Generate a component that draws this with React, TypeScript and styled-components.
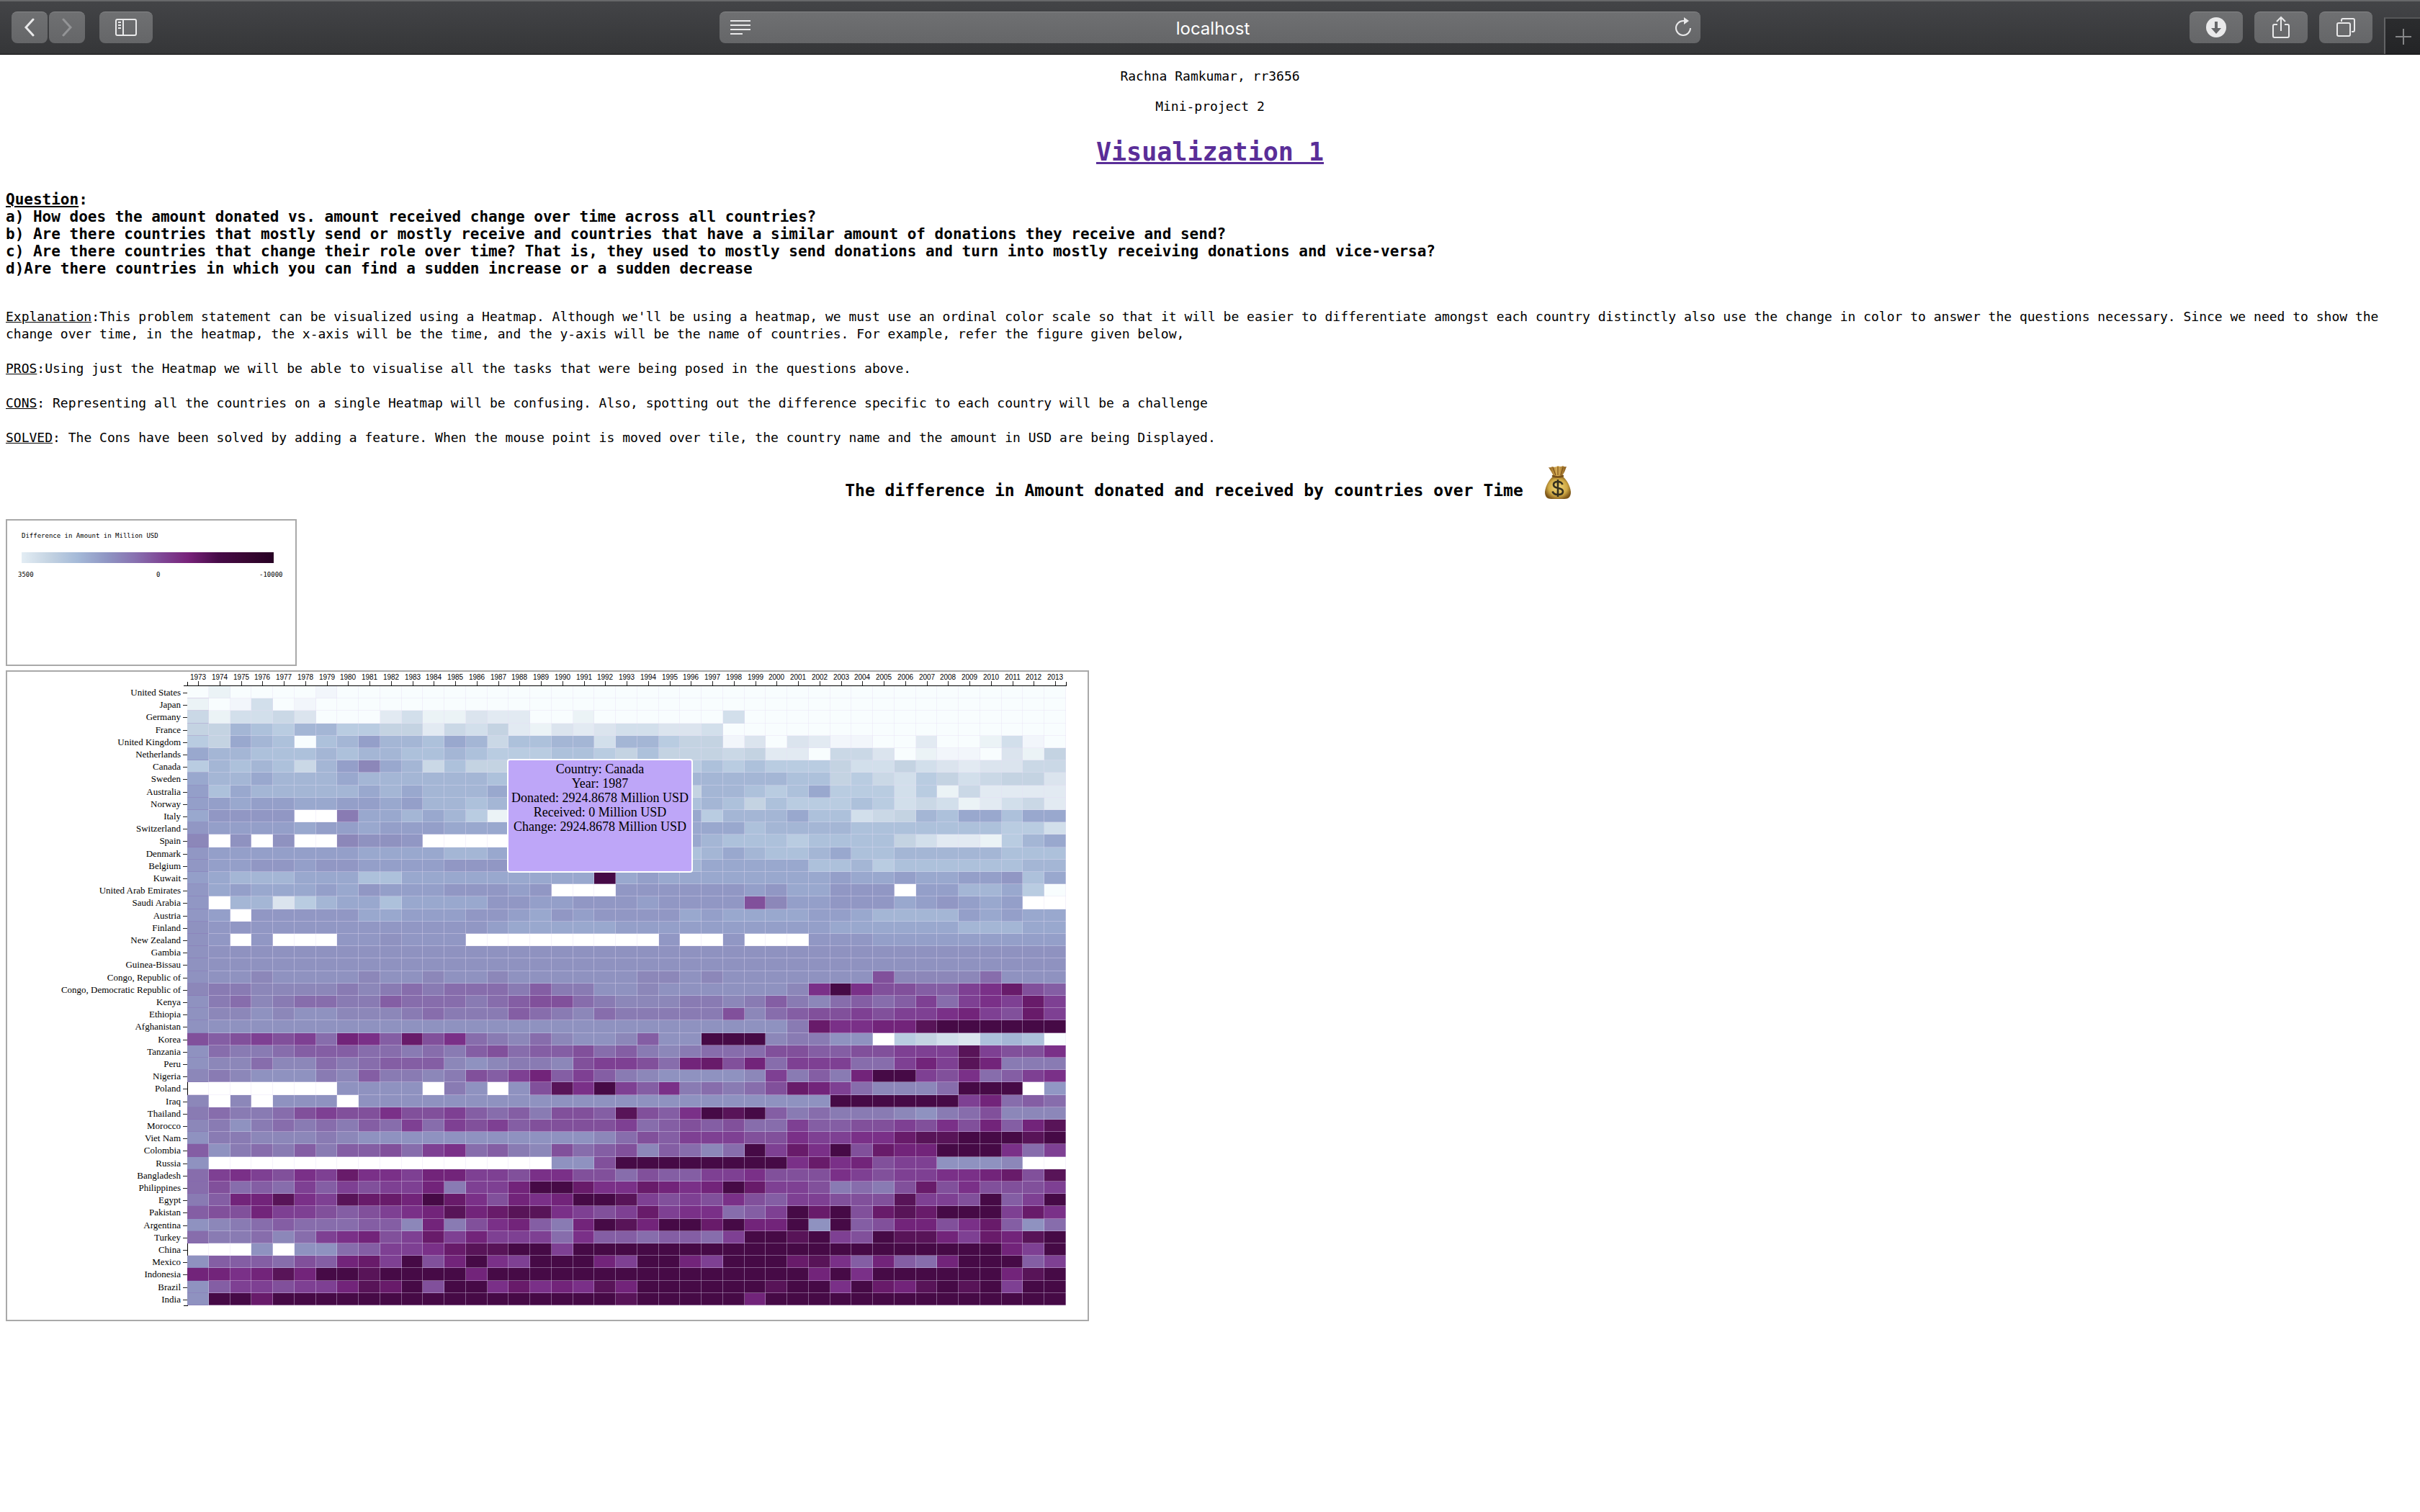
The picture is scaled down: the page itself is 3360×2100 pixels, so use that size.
import React from "react";
import styled, { createGlobalStyle } from "styled-components";

const MONO = '"DejaVu Sans Mono", "Liberation Mono", monospace';
const SERIF = '"Liberation Serif", "Times New Roman", serif';
const SANS = '"Liberation Sans", Arial, sans-serif';

const GlobalStyle = createGlobalStyle`
  *, *::before, *::after { box-sizing: border-box; }
  body { margin: 0; background: #fff; color: #000; }
`;

/* ---------- browser toolbar ---------- */

const Toolbar = styled.header`
  display: grid;
  grid-template-columns: 1fr minmax(200px, 1362px) 1fr;
  height: 76px;
  padding-top: 14px;
  border-top: 2px solid #67686a;
  border-bottom: 1px solid #050506;
  background: linear-gradient(#434447, #353638);
`;

const ToolGroup = styled.div<{ $end?: boolean }>`
  display: flex;
  align-items: flex-start;
  justify-content: ${(p) => (p.$end ? "flex-end" : "flex-start")};
  gap: ${(p) => (p.$end ? 16 : 20)}px;
  padding-left: ${(p) => (p.$end ? 0 : 16)}px;
`;

const NavPair = styled.nav`
  display: flex;
  gap: 2px;
`;

const ToolButton = styled.button<{ $narrow?: boolean }>`
  display: flex;
  align-items: center;
  justify-content: center;
  width: ${(p) => (p.$narrow ? 50 : 74)}px;
  height: 44px;
  padding: 0 0 2px;
  border: 0;
  border-top: 1px solid #858688;
  border-radius: 8px;
  background: linear-gradient(#6f7072, #656668);
  color: #e9e9ea;
  &:disabled { color: #939496; }
`;

const NewTabButton = styled.button`
  display: flex;
  align-items: center;
  justify-content: center;
  width: 50px;
  height: 51px;
  margin-top: 8px;
  padding: 0 0 0 2px;
  border: 0;
  border-top: 2px solid #555658;
  border-left: 2px solid #626365;
  background: linear-gradient(#2b2c2e, #232426);
  color: #858688;
`;

const AddressBar = styled.div`
  display: flex;
  align-items: center;
  height: 44px;
  padding: 0 10px 0 14px;
  border-top: 1px solid #858688;
  border-radius: 8px;
  background: linear-gradient(#6f7072, #656668);
  color: #e9e9ea;
`;

const AddressInput = styled.input`
  flex: 1;
  min-width: 0;
  padding: 2px 0 0;
  border: 0;
  outline: 0;
  background: transparent;
  color: #fff;
  font: 24px Inter, ${SANS};
  text-align: center;
`;

const BarButton = styled.button`
  display: flex;
  padding: 0 0 2px;
  border: 0;
  background: transparent;
  color: inherit;
`;

/* ---------- page text ---------- */

const Page = styled.main`
  padding: 18px 8px 0;
  font: 18px/24px ${MONO};
`;

const Byline = styled.p`
  margin: 0 0 18px;
  text-align: center;
`;

const PageTitle = styled.h1`
  margin: 30px 0 33px;
  font-size: 35px;
  line-height: 42px;
  text-align: center;
  a { color: #5a2e98; }
`;

const Questions = styled.h4`
  margin: 0 0 43px;
  font-size: 21px;
  line-height: 24px;
`;

const Note = styled.p`
  margin: 0 0 24px;
`;

const ChartTitle = styled.h3`
  display: flex;
  align-items: flex-end;
  justify-content: center;
  gap: 24px;
  margin: 26px 0 27px;
  font-size: 23px;
  line-height: 26px;
`;

/* ---------- charts ---------- */

const Figure = styled.figure`
  position: relative;
  width: fit-content;
  margin: 0 0 6px;
  border: 2px solid #a9a9a9;
  svg { display: block; max-width: 100%; }
`;

const LegendText = styled.text`
  font: 9px ${MONO};
`;

const YearText = styled.text`
  font: 10px ${SANS};
  text-anchor: middle;
`;

const CountryText = styled.text`
  font: 13px ${SERIF};
  text-anchor: end;
`;

const Tooltip = styled.div`
  position: absolute;
  left: 694px;
  top: 121px;
  width: 258px;
  height: 158px;
  padding-top: 2px;
  border: 2px solid #fff;
  border-radius: 4px;
  background: #bea6f8;
  font: 18px/20px ${SERIF};
  text-align: center;
  white-space: nowrap;
`;

/* ---------- data ---------- */

const COLORS: Record<string, string> = {
  a: "#f8fdfe", A: "#f2f6fb", b: "#ebf3f6", B: "#e2eaf2", c: "#dbe4ee", C: "#d2dfeb",
  d: "#cad8e6", D: "#c4d3e2", e: "#b9cce1", f: "#adc1db", g: "#a4b6d5", h: "#99a8ce",
  i: "#949fc9", j: "#9197c4", k: "#8f92c0", l: "#8c87b9", m: "#897bb3", n: "#876dac",
  o: "#845ea4", p: "#81509b", q: "#7e4093", r: "#7a3088", s: "#72247a", t: "#681b6a",
  u: "#581458", v: "#460a46",
};

const r = (s: string, n: number) => s.repeat(n);

const ROWS: [string, string][] = [
  ["United States", "abaaaaA" + r("a", 34)],
  ["Japan", "baACaA" + r("a", 35)],
  ["Germany", "dbCCdcaaaBCbbcBBaabaa" + "aaaaC" + r("a", 15)],
  ["France", "DDgfeggeeDDBdCDBbcBcC" + "CccC" + r("a", 16)],
  ["United Kingdom", "eDhgfafgiggfhgdffggCg" + "geDDAcacBAAaaBaabCAa"],
  ["Netherlands", "hggfffgfggffgfeeeffeD" + "fDDDdDBBaddcabAAacbD"],
  ["Canada", "egfgfdgilhgdfDDeeeeee" + "eeefefeeeDCCDCcBccdd"],
  ["Sweden", "hgghggghggggggfgggggg" + "gggggggffDedCeDCdDDc"],
  ["Australia", "ifhggggghghggghffffff" + "eeDggfefheeeCebdBBBB"],
  ["Norway", "iihiihhiihiggfggggggg" + "fffgfDfeeefeCdCbBCdB"],
  ["Italy", "hjjjj..mhhghgebbbbbbb" + "fgheggghffCdDgfhhfhh"],
  ["Switzerland", "jiiiihiihiiihhhgggggg" + "gghhhfggggfffffffeeC"],
  ["Spain", "l.k.k..lkkj.........." + "hhhgfffeffffDCBBbegh"],
  ["Denmark", "jiiiiiiihhhhgghgggggg" + "ggfghgffghffgggggfff"],
  ["Belgium", "jiijjijjiiiijjjhhhhhh" + "hhghhhhhffgeffffffgg"],
  ["Kuwait", "ihggghhhffhhhhhhhhhvh" + "ihhhhhhhhihhihhiijfh"],
  ["United Arab Emirates", "jhihhhihjiiijjjij...j" + "jjjjjijhhjjj.iigghea"],
  ["Saudi Arabia", "j.ggceghhfhhhhjjiijjj" + "ijjjjpliijjjhijihi.."],
  ["Austria", "ji.jjjjjhhiiijjihjijj" + "jjhihhhhiihggggihihh"],
  ["Finland", "kjjjjjjjjjjjjjihhhhhi" + "iiiiiiiiihhhhhhggghh"],
  ["New Zealand", "kj.j...jjkjjj........" + ".j..j...jjjiiiiiiiii"],
  ["Gambia", r("k", 41)],
  ["Guinea-Bissau", r("k", 41)],
  ["Congo, Republic of", "kkklkkkklkklkklkkkkkk" + "llklkkkkkkkpllllnkkk"],
  ["Congo, Democratic Republic of", "lmmllllmlmnmnnnmommkk" + "lkkkkkklrvrppooqrtpo"],
  ["Kenya", "kmnlmnnmmonnnmnoppnml" + "llmmlmomlnonoqnqrqtq"],
  ["Ethiopia", "kllklkklllmnmmmonmlnm" + "mmmmplnoppqpqqrsqptq"],
  ["Afghanistan", r("k", 21) + "kkkkkkkmtrrssuvvvvvv"],
  ["Korea", "popqpqnsrotprnmlnlkkl" + "okkvvvlmmkk.eDCcfgfa"],
  ["Tanzania", "knmmnooonnmnmopnoopno" + "mlmnnnppooppqqquqppr"],
  ["Peru", "kllnllnmnooolklmmlpqq" + "pnstpsnqqqnnqsqusmmm"],
  ["Nigeria", "lmlkkkmlommlmpoqsoqom" + "lkkkklqmomsvvqprnoqr"],
  ["Poland", ".......kkkk.mk.kpurvq" + "ormnmnptsqnlllnvvv.j"],
  ["Iraq", "l.l.kkk.kkkkkkkkkkkkk" + "kkkkkkkkkvvvvvvqsnon"],
  ["Thailand", "mnmmnpqpprppqonomppou" + "porvuvomnmmmlkmnplll"],
  ["Morocco", "lmkmnmnmonqnqpqoppppq" + "nopopnnqooppqprpsosu"],
  ["Viet Nam", "kmmlllmlkkkkkkkkkkkln" + "poqqqpprqqrrtuuvvvuv"],
  ["Colombia", "okmnmomoopnqrnomlpnop" + "lonlnvqtrvptssvvvrnq"],
  ["Russia", "k" + r(".", 16) + "kkpv" + "vvvvvvvrtrspqqkkkl.."],
  ["Bangladesh", "nqrqprqtrrqssqqprrppn" + "pooqqrppprqpqqrrstpu"],
  ["Philippines", "npnonqoqpqqsmqqsvvtrr" + "tsrsvtqqpmnmptprpppq"],
  ["Egypt", "mossurquttsvtrpsrsvvu" + "qpqprpoqqpppuqqpvoqv"],
  ["Pakistan", "oppsqqpopqrsustuurqpq" + "tqrrnoqvtvptutvvvqtr"],
  ["Argentina", "klmnonnnoolsmprsomsvu" + "svvtvssvkvopssprtokn"],
  ["Turkey", "nmmnlnqrspqtqsqqqnroo" + "noonqvvuvqpvuusqtsuv"],
  ["China", "...k.kknoqqrtuuvvqvvv" + r("v", 17) + "sqv"],
  ["Mexico", "kooonpostqvpsvrqvvvsq" + "vvsqvvvturosonsvvvoq"],
  ["Indonesia", "ssrsusvvuvvvvsvvvvvvv" + "vvvvvvvvsvrvvvvvvsuv"],
  ["Brazil", "koqqpqqsutvpvvrtrsrus" + "vvvvvvuvvrvtsuvuvqvv"],
  ["India", "kvvt" + r("v", 16) + "u" + "vvvvvs" + r("v", 14)],
];

const LEGEND_STOPS: [string, string][] = [
  ["0%", "#e3edf4"], ["11%", "#c4d3e2"], ["22%", "#a5bad8"], ["34%", "#8f95c3"],
  ["45%", "#8871b0"], ["56%", "#7e4594"], ["66%", "#78227a"], ["78%", "#470b48"],
  ["89%", "#390733"], ["100%", "#270124"],
];

const LEFT = 250;
const TOP = 20;
const PLOT_W = 1220;
const PLOT_H = 860;
const YEARS = Array.from({ length: 41 }, (_, i) => 1973 + i);
const colX = (i: number) => Math.round(LEFT + (i * PLOT_W) / YEARS.length);
const rowY = (i: number) => Math.round(TOP + (i * PLOT_H) / ROWS.length);

function Legend() {
  return (
    <Figure>
      <svg width="400" height="200" viewBox="0 0 400 200" role="img" aria-label="Color legend">
        <defs>
          <linearGradient id="amount-scale">
            {LEGEND_STOPS.map(([offset, color]) => (
              <stop key={offset} offset={offset} stopColor={color} />
            ))}
          </linearGradient>
        </defs>
        <LegendText x="20" y="24">Difference in Amount in Million USD</LegendText>
        <rect x="20" y="44" width="350" height="15" fill="url(#amount-scale)" />
        <LegendText x="15" y="78">3500</LegendText>
        <LegendText x="207" y="78">0</LegendText>
        <LegendText x="350" y="78">-10000</LegendText>
      </svg>
    </Figure>
  );
}

function Heatmap() {
  return (
    <Figure>
      <svg width="1500" height="900" viewBox="0 0 1500 900" role="img" aria-label="Heatmap of countries by year">
        <g shapeRendering="crispEdges">
          <path
            d={`M${LEFT - 6} ${TOP - 1}h6v${PLOT_H + 1}h-6 M${LEFT} ${TOP - 7}v6h${PLOT_W}v-6`}
            transform="translate(0.5 0.5)"
            stroke="#000"
            fill="none"
          />
          {ROWS.map(([name, cells], y) =>
            cells.split("").map((cell, x) =>
              cell === "." ? (
                <rect key={name + x} x={colX(x) + 1} y={rowY(y)} width={colX(x + 1) - colX(x) - 1} height={rowY(y + 1) - rowY(y)} fill="#fff" />
              ) : (
                <rect key={name + x} x={colX(x)} y={rowY(y)} width={colX(x + 1) - colX(x)} height={rowY(y + 1) - rowY(y)} fill={COLORS[cell]} />
              )
            )
          )}
          {ROWS.map(([name], y) => (
            <g key={name}>
              <rect x={LEFT - 6} y={Math.round((rowY(y) + rowY(y + 1)) / 2)} width="6" height="1" fill="#222" />
              <rect x={colX(1)} y={rowY(y + 1) - 1} width={LEFT + PLOT_W - colX(1)} height="1" fill="#e6dcf5" opacity="0.38" />
              <rect x={LEFT} y={rowY(y + 1) - 1} width={colX(1) - LEFT} height="1" fill="#8560b0" opacity="0.25" />
            </g>
          ))}
          {YEARS.map((year, x) => (
            <g key={year}>
              <rect x={Math.round((colX(x) + colX(x + 1)) / 2)} y={TOP - 7} width="1" height="6" fill="#222" />
              <rect x={colX(x + 1) - 1} y={TOP} width="1" height={PLOT_H} fill="#e6dcf5" opacity="0.38" />
            </g>
          ))}
        </g>
        {YEARS.map((year, x) => (
          <YearText key={year} x={Math.round((colX(x) + colX(x + 1)) / 2)} y={TOP - 9}>{year}</YearText>
        ))}
        {ROWS.map(([name], y) => (
          <CountryText key={name} x={LEFT - 9} y={rowY(y) + 13}>{name}</CountryText>
        ))}
      </svg>
      <Tooltip role="tooltip">
        <div>Country: Canada</div>
        <div>Year: 1987</div>
        <div>Donated: 2924.8678 Million USD</div>
        <div>Received: 0 Million USD</div>
        <div>Change: 2924.8678 Million USD</div>
      </Tooltip>
    </Figure>
  );
}

function MoneyBag() {
  return (
    <svg width="48" height="48" viewBox="0 0 48 48" role="img" aria-label="Money bag">
      <defs>
        <radialGradient id="bag-body" cx="0.5" cy="0.5" r="0.55">
          <stop offset="0" stopColor="#f3da7d" />
          <stop offset="0.65" stopColor="#cfa945" />
          <stop offset="1" stopColor="#7c5518" />
        </radialGradient>
        <linearGradient id="bag-neck">
          <stop offset="0" stopColor="#8f6220" />
          <stop offset="0.5" stopColor="#dcb35a" />
          <stop offset="1" stopColor="#855719" />
        </linearGradient>
      </defs>
      <path d="M11 3q3 1 5-1q4 2 8-1q4 2 7 0q2 2 5 1q-2 7-6 13H18Q15 9 11 3z" fill="url(#bag-neck)" />
      <path d="M17 3l4 11M24 2v12M31 3l-3 11" stroke="#80551a" strokeWidth="1.3" fill="none" />
      <path d="M18 15h12c6 5 11 13 12 22c0 7-3 10-9 10H15c-6 0-9-3-9-10c1-9 6-17 12-22z" fill="url(#bag-body)" />
      <path d="M17 15q7 3 14 0" stroke="#76501a" strokeWidth="2.6" fill="none" strokeLinecap="round" />
      <path d="M30.5 27q-1.5-4-6.500-4q-6 0-6 4.200q0 3.300 6 4.500q7 1.300 7 5q0 4.300-7 4.300q-6 0-7.500-4.500M24 20v24" stroke="#35301e" strokeWidth="2.6" fill="none" />
    </svg>
  );
}

export default function App() {
  return (
    <>
      <GlobalStyle />
      <Toolbar>
        <ToolGroup>
          <NavPair aria-label="History">
            <ToolButton $narrow aria-label="Back">
              <svg width="16" height="26" viewBox="0 0 16 26" fill="none" stroke="currentColor" strokeWidth="3" strokeLinecap="round">
                <path d="M13 2L3 13l10 11" />
              </svg>
            </ToolButton>
            <ToolButton $narrow disabled aria-label="Forward">
              <svg width="16" height="26" viewBox="0 0 16 26" fill="none" stroke="currentColor" strokeWidth="3" strokeLinecap="round">
                <path d="M3 2l10 11L3 24" />
              </svg>
            </ToolButton>
          </NavPair>
          <ToolButton aria-label="Show sidebar">
            <svg width="30" height="24" viewBox="0 0 30 24" fill="none" stroke="currentColor" strokeWidth="2">
              <rect x="1" y="1" width="28" height="22" rx="2" />
              <path d="M11 1v22M4 5h4M4 9h4M4 13h4" />
            </svg>
          </ToolButton>
        </ToolGroup>
        <AddressBar>
          <BarButton aria-label="Show reader view">
            <svg width="30" height="20" viewBox="0 0 30 20" fill="none" stroke="currentColor" strokeWidth="2">
              <path d="M1 1h28M1 7h28M1 13h28M1 19h17" />
            </svg>
          </BarButton>
          <AddressInput aria-label="Address" defaultValue="localhost" />
          <BarButton aria-label="Reload">
            <svg width="26" height="28" viewBox="0 0 26 28" fill="none" stroke="currentColor" strokeWidth="2">
              <path d="M22 15a10 10 0 1 1-10-10h4" />
              <path d="M13 0l7 5l-7 5z" fill="currentColor" stroke="none" />
            </svg>
          </BarButton>
        </AddressBar>
        <ToolGroup $end>
          <ToolButton aria-label="Downloads">
            <svg width="28" height="28" viewBox="0 0 28 28">
              <circle cx="14" cy="14" r="14" fill="currentColor" />
              <path d="M12 6h4v9h5l-7 8l-7-8h5z" fill="#666769" />
            </svg>
          </ToolButton>
          <ToolButton aria-label="Share">
            <svg width="24" height="32" viewBox="0 0 24 32" fill="none" stroke="currentColor" strokeWidth="2">
              <path d="M7 12H3q-2 0-2 2v14q0 2 2 2h18q2 0 2-2V14q0-2-2-2h-4M12 21V2M6 8l6-6l6 6" />
            </svg>
          </ToolButton>
          <ToolButton aria-label="Show all tabs">
            <svg width="26" height="26" viewBox="0 0 26 26" fill="none" stroke="currentColor" strokeWidth="2">
              <rect x="1" y="7" width="18" height="18" rx="2" />
              <path d="M7 5V3q0-2 2-2h14q2 0 2 2v14q0 2-2 2h-2" />
            </svg>
          </ToolButton>
          <NewTabButton aria-label="New tab">
            <svg width="22" height="22" viewBox="0 0 22 22" fill="none" stroke="currentColor" strokeWidth="2">
              <path d="M11 0v22M0 11h22" />
            </svg>
          </NewTabButton>
        </ToolGroup>
      </Toolbar>
      <Page>
        <Byline>Rachna Ramkumar, rr3656</Byline>
        <Byline>Mini-project 2</Byline>
        <PageTitle><a href="#visualization-1">Visualization 1</a></PageTitle>
        <Questions>
          <u>Question</u>:<br />
          a) How does the amount donated vs. amount received change over time across all countries?<br />
          b) Are there countries that mostly send or mostly receive and countries that have a similar amount of donations they receive and send?<br />
          c) Are there countries that change their role over time? That is, they used to mostly send donations and turn into mostly receiving donations and vice-versa?<br />
          d)Are there countries in which you can find a sudden increase or a sudden decrease
        </Questions>
        <Note>
          <u>Explanation</u>:This problem statement can be visualized using a Heatmap. Although we'll be using a heatmap, we must use an ordinal color scale so that it will be easier to differentiate amongst each country distinctly also use the change in color to answer the questions necessary. Since we need to show the change over time, in the heatmap, the x-axis will be the time, and the y-axis will be the name of countries. For example, refer the figure given below,
        </Note>
        <Note><u>PROS</u>:Using just the Heatmap we will be able to visualise all the tasks that were being posed in the questions above.</Note>
        <Note><u>CONS</u>: Representing all the countries on a single Heatmap will be confusing. Also, spotting out the difference specific to each country will be a challenge</Note>
        <Note><u>SOLVED</u>: The Cons have been solved by adding a feature. When the mouse point is moved over tile, the country name and the amount in USD are being Displayed.</Note>
        <ChartTitle>
          The difference in Amount donated and received by countries over Time
          <MoneyBag />
        </ChartTitle>
        <Legend />
        <Heatmap />
      </Page>
    </>
  );
}
